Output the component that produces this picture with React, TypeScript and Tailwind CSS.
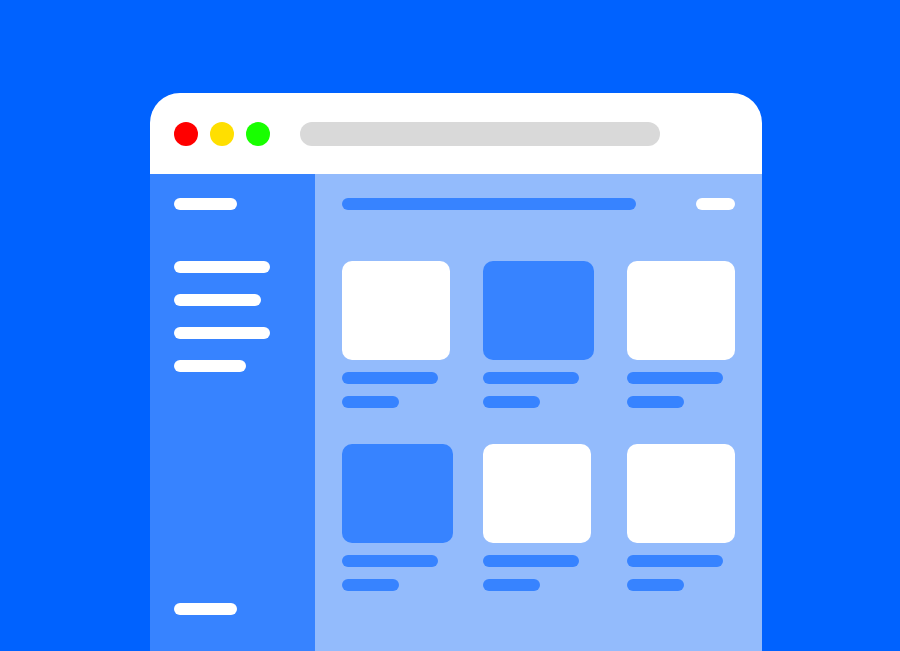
import React from "react";

const cards = [
  { w: "w-[108px]", blue: false },
  { w: "w-[111px]", blue: true },
  { w: "w-[108px]", blue: false },
  { w: "w-[111px]", blue: true },
  { w: "w-[108px]", blue: false },
  { w: "w-[108px]", blue: false },
];

export default function App() {
  return (
    <div className="h-[651px] w-full overflow-hidden bg-[#0062ff] pt-[93px] pl-[150px]">
      <div className="w-[612px] h-[600px] overflow-hidden rounded-t-[30px] bg-white flex flex-col">
        <div className="h-[81px] shrink-0 flex items-center px-6">
          <div className="flex gap-3">
            <div className="w-6 h-6 rounded-full bg-[#ff0000]" />
            <div className="w-6 h-6 rounded-full bg-[#ffdf00]" />
            <div className="w-6 h-6 rounded-full bg-[#18ff00]" />
          </div>
          <div className="ml-[30px] w-[360px] h-6 rounded-full bg-[#d9d9d9]" />
        </div>
        <div className="flex h-[477px]">
          <div className="w-[165px] shrink-0 bg-[#3783ff] flex flex-col px-6 pt-6 pb-9">
            <div className="w-[63px] h-3 rounded-full bg-white" />
            <div className="mt-[51px] flex flex-col gap-[21px]">
              <div className="w-[96px] h-3 rounded-full bg-white" />
              <div className="w-[87px] h-3 rounded-full bg-white" />
              <div className="w-[96px] h-3 rounded-full bg-white" />
              <div className="w-[72px] h-3 rounded-full bg-white" />
            </div>
            <div className="mt-auto w-[63px] h-3 rounded-full bg-white" />
          </div>
          <div className="flex-1 bg-[#93bbfc] px-[27px] pt-6">
            <div className="flex items-center justify-between">
              <div className="w-[294px] h-3 rounded-full bg-[#3783ff]" />
              <div className="w-[39px] h-3 rounded-full bg-white" />
            </div>
            <div className="mt-[51px] grid grid-cols-[141px_144px_108px] gap-y-9">
              {cards.map((c, i) => (
                <div key={i} className="flex flex-col">
                  <div
                    className={`${c.w} h-[99px] rounded-[10px] ${c.blue ? "bg-[#3783ff]" : "bg-white"}`}
                  />
                  <div className="mt-3 w-[96px] h-3 rounded-full bg-[#3783ff]" />
                  <div className="mt-3 w-[57px] h-3 rounded-full bg-[#3783ff]" />
                </div>
              ))}
            </div>
          </div>
        </div>
      </div>
    </div>
  );
}
